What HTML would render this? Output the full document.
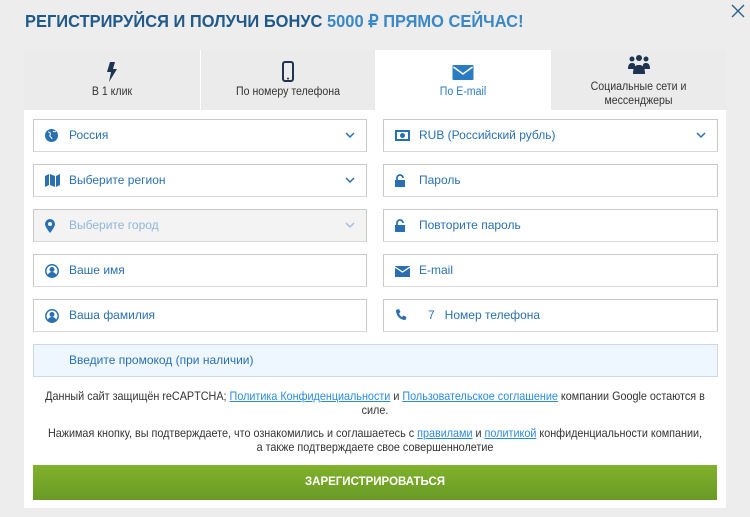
<!DOCTYPE html>
<html><head><meta charset="utf-8"><style>
*{box-sizing:border-box;margin:0;padding:0}
body{width:750px;height:517px;background:#ededed;font-family:"Liberation Sans",sans-serif;position:relative;overflow:hidden}
.title{position:absolute;left:25px;top:11px;font-size:17.5px;font-weight:bold;color:#1f5a8a;white-space:nowrap;transform:scaleX(0.94);transform-origin:left}
.title span{color:#3a88c6}
.close{position:absolute;left:731px;top:4px}
.panel{position:absolute;left:24px;top:50px;width:702px;height:458px;background:#fff}
.tab{position:absolute;top:0;height:60px;background:#ebebeb;text-align:center;font-size:11.5px;color:#333}
.tab.act{background:#fff;color:#2a7bc0}
.tab .lb{position:absolute;left:0;right:0;top:36px;transform:scaleX(.92)}
.tab svg{position:absolute;left:50%;transform:translateX(-50%)}
.f{position:absolute;height:33px;border:1px solid #c9c9c9;border-bottom-color:#d8d8d8;background:#fff;font-size:12px;color:#2a70b0;line-height:31px;padding-left:35px}
.f.dis{background:#f3f3f3;color:#8fb6d8}
.f svg.ic{position:absolute;left:11px;top:9px}
.f .ch{position:absolute;right:11px;top:12px}
.t{position:absolute;left:33px;width:760px;transform:scaleX(.9);transform-origin:left;text-align:center;font-size:12px;color:#333;line-height:14px}
.t a{color:#2a8ae0;text-decoration:underline}
.btn{position:absolute;left:33px;top:465px;width:684px;height:35px;background:linear-gradient(#80b22c,#6a9a26);color:#fff;font-weight:bold;font-size:11.5px;text-align:center;line-height:35px}
</style></head><body>
<div class="title">РЕГИСТРИРУЙСЯ И ПОЛУЧИ БОНУС <span>5000 ₽ ПРЯМО СЕЙЧАС!</span></div>
<svg class="close" width="14" height="14" viewBox="0 0 14 14"><path d="M1 1l12 12M13 1L1 13" stroke="#2c5f8c" stroke-width="1.4"/></svg>
<div class="panel">
<div class="tab" style="left:0;width:176px"><svg style="top:12px" width="12" height="20" viewBox="0 0 12 20"><path d="M4 0h5L7 7h4L3 20l2-10H1z" fill="#1e3350"/></svg><div class="lb">В 1 клик</div></div>
<div class="tab" style="left:176px;width:175px;border-left:1px solid #fff"><svg style="top:11px" width="12" height="21" viewBox="0 0 12 21"><rect x="1" y="1" width="10" height="19" rx="2" fill="none" stroke="#1e3350" stroke-width="2"/><circle cx="6" cy="17.5" r="1" fill="#1e3350"/></svg><div class="lb">По номеру телефона</div></div>
<div class="tab act" style="left:351px;width:176px"><svg style="top:15px" width="21" height="15" viewBox="0 0 21 15"><rect width="21" height="15" rx="1" fill="#2a7bc0"/><path d="M1 2l9.5 7L20 2" fill="none" stroke="#fff" stroke-width="1.5"/></svg><div class="lb">По E-mail</div></div>
<div class="tab" style="left:527px;width:175px"><svg style="top:5px" width="22" height="19" viewBox="0 0 22 19"><g fill="#1e3350"><circle cx="4" cy="4" r="2.5"/><circle cx="11" cy="3" r="3"/><circle cx="18" cy="4" r="2.5"/><path d="M0 14c0-5 2-6 4-6s3 1 3 2v4z"/><path d="M22 14c0-5-2-6-4-6s-3 1-3 2v4z"/><path d="M5 19c0-8 3-9 6-9s6 1 6 9z"/></g></svg><div class="lb" style="top:30px;line-height:14px">Социальные сети и<br>мессенджеры</div></div>
</div>
<div class="f" style="left:33px;top:119px;width:334px"><svg class="ic" width="13" height="13" viewBox="0 0 13 13"><circle cx="6.5" cy="6.5" r="6.5" fill="#2a70b0"/><path d="M3 3c2 0 3 1 2 3s2 2 2 4M8 2c1 1 2 1 3 0" stroke="#fff" fill="none"/></svg>Россия<svg class="ch" width="10" height="7" viewBox="0 0 10 7"><path d="M1 1l4 4 4-4" stroke="#2a70b0" stroke-width="1.5" fill="none"/></svg></div>
<div class="f" style="left:33px;top:164px;width:334px"><svg class="ic" width="15" height="13" viewBox="0 0 15 13"><path d="M0 2l4-2v11l-4 2zM5 0l5 2v11l-5-2zM11 2l4-2v11l-4 2z" fill="#2a70b0"/></svg>Выберите регион<svg class="ch" width="10" height="7" viewBox="0 0 10 7"><path d="M1 1l4 4 4-4" stroke="#2a70b0" stroke-width="1.5" fill="none"/></svg></div>
<div class="f dis" style="left:33px;top:209px;width:334px"><svg class="ic" width="10" height="14" viewBox="0 0 10 14"><path d="M5 0a5 5 0 0 1 5 5c0 3-5 9-5 9S0 8 0 5a5 5 0 0 1 5-5z" fill="#2a70b0"/><circle cx="5" cy="5" r="2" fill="#f3f3f3"/></svg>Выберите город<svg class="ch" width="10" height="7" viewBox="0 0 10 7"><path d="M1 1l4 4 4-4" stroke="#9fc0dc" stroke-width="1.5" fill="none"/></svg></div>
<div class="f" style="left:33px;top:254px;width:334px"><svg class="ic" width="14" height="14" viewBox="0 0 14 14"><circle cx="7" cy="7" r="6.2" fill="none" stroke="#2a70b0" stroke-width="1.5"/><circle cx="7" cy="5.5" r="2.5" fill="#2a70b0"/><path d="M2.5 11.5c1-3 3-3.5 4.5-3.5s3.5.5 4.5 3.5a6 6 0 0 1-9 0z" fill="#2a70b0"/></svg>Ваше имя</div>
<div class="f" style="left:33px;top:299px;width:334px"><svg class="ic" width="14" height="14" viewBox="0 0 14 14"><circle cx="7" cy="7" r="6.2" fill="none" stroke="#2a70b0" stroke-width="1.5"/><circle cx="7" cy="5.5" r="2.5" fill="#2a70b0"/><path d="M2.5 11.5c1-3 3-3.5 4.5-3.5s3.5.5 4.5 3.5a6 6 0 0 1-9 0z" fill="#2a70b0"/></svg>Ваша фамилия</div>
<div class="f" style="left:383px;top:119px;width:335px"><svg class="ic" width="15" height="11" viewBox="0 0 15 11" style="top:10px"><rect width="15" height="11" fill="#2a70b0"/><rect x="2" y="2" width="11" height="7" fill="#fff"/><circle cx="7.5" cy="5.5" r="2.5" fill="#2a70b0"/></svg>RUB (Российский рубль)<svg class="ch" width="10" height="7" viewBox="0 0 10 7"><path d="M1 1l4 4 4-4" stroke="#2a70b0" stroke-width="1.5" fill="none"/></svg></div>
<div class="f" style="left:383px;top:164px;width:335px"><svg class="ic" width="11" height="13" viewBox="0 0 11 13"><path d="M2 6V4a3 3 0 0 1 6 0" stroke="#2a70b0" stroke-width="1.8" fill="none"/><rect x="0" y="6" width="10" height="7" fill="#2a70b0"/></svg>Пароль</div>
<div class="f" style="left:383px;top:209px;width:335px"><svg class="ic" width="11" height="13" viewBox="0 0 11 13"><path d="M2 6V4a3 3 0 0 1 6 0" stroke="#2a70b0" stroke-width="1.8" fill="none"/><rect x="0" y="6" width="10" height="7" fill="#2a70b0"/></svg>Повторите пароль</div>
<div class="f" style="left:383px;top:254px;width:335px"><svg class="ic" width="15" height="11" viewBox="0 0 15 11" style="top:11px"><rect width="15" height="11" fill="#2a70b0"/><path d="M0 1l7.5 5L15 1" stroke="#fff" stroke-width="1.3" fill="none"/></svg>E-mail</div>
<div class="f" style="left:383px;top:299px;width:335px;padding-left:44px;color:#2a70b0"><svg class="ic" width="12" height="12" viewBox="0 0 12 12"><path d="M1 1l3-1 1.5 3-1.5 1.5c1 2 2 3 3 3.5L8.5 6.5 11.5 8l-1 3C5 11 1 7 1 1z" fill="#2a70b0"/></svg>7&nbsp;&nbsp;&nbsp;Номер телефона</div>
<div class="f" style="left:33px;top:344px;width:685px;background:#eef7ff;border-color:#cfd8e0">Введите промокод (при наличии)</div>
<div class="t" style="top:389px">Данный сайт защищён reCAPTCHA; <a>Политика Конфиденциальности</a> и <a>Пользовательское соглашение</a> компании Google остаются в силе.</div>
<div class="t" style="top:426px">Нажимая кнопку, вы подтверждаете, что ознакомились и соглашаетесь с <a>правилами</a> и <a>политикой</a> конфиденциальности компании,<br>а также подтверждаете свое совершеннолетие</div>
<div class="btn">ЗАРЕГИСТРИРОВАТЬСЯ</div>
</body></html>
